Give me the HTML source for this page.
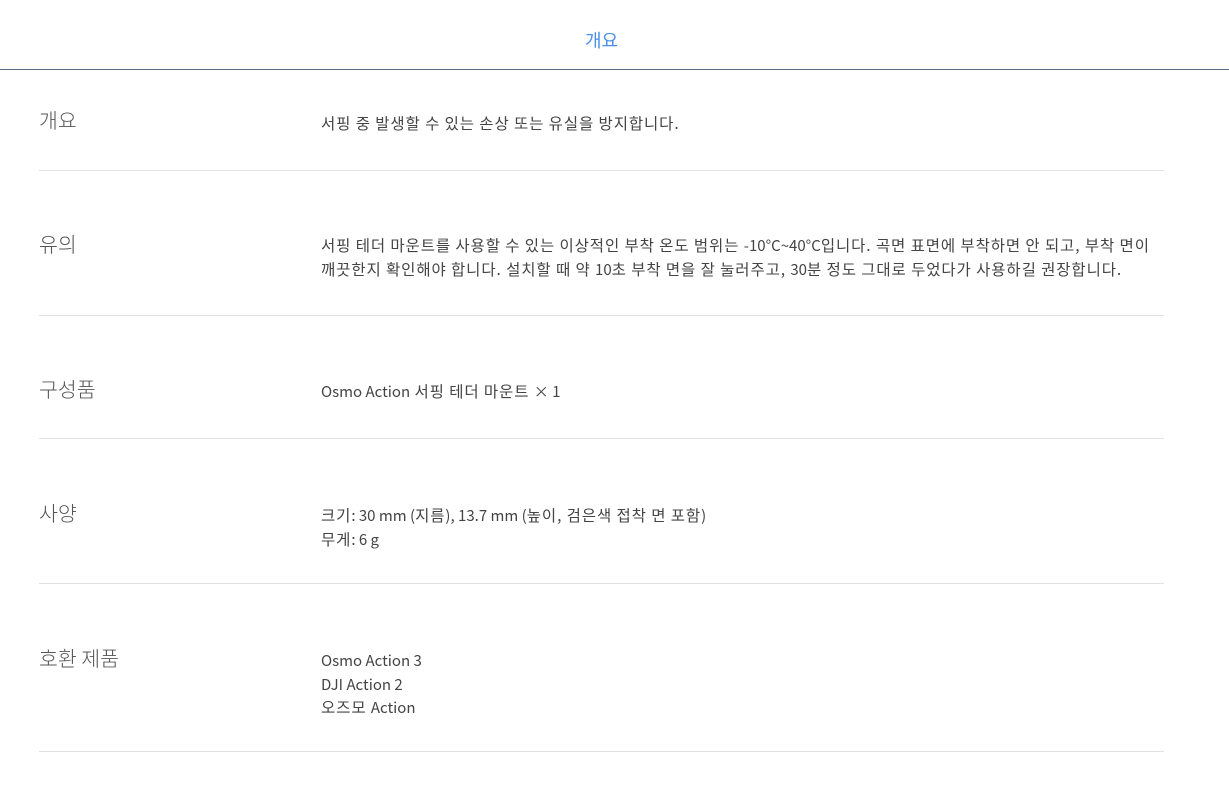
<!DOCTYPE html>
<html><head><meta charset="utf-8"><style>
body{margin:0;width:1229px;height:788px;background:#fff;position:relative;overflow:hidden;font-family:"Noto Sans CJK KR",sans-serif;}
.t{position:absolute;white-space:nowrap}
.h{position:absolute;left:0;width:1229px;height:1px;background:#5a6a80;top:69px}
.d{position:absolute;left:39px;width:1125px;height:1px;background:#e2e2e2}
.l{position:absolute;left:39px;font-size:20.5px;color:#555;line-height:24px;font-weight:300}
.c{position:absolute;left:321px;font-size:15.5px;letter-spacing:0.9px;color:#444;line-height:22.7px;white-space:nowrap}
.e{letter-spacing:0;font-size:15px}
</style></head><body>
<div class="t" style="left:585px;top:28px;font-size:18px;color:#4a8fe8;line-height:24px">개요</div>
<div class="h"></div>
<div class="l" style="top:107px">개요</div>
<div class="c" style="top:112px">서핑 중 발생할 수 있는 손상 또는 유실을 방지합니다.</div>
<div class="d" style="top:170px"></div>
<div class="l" style="top:231px">유의</div>
<div class="c" style="top:234px">서핑 테더 마운트를 사용할 수 있는 이상적인 부착 온도 범위는 <span class="e">-10°C~40°C</span>입니다. 곡면 표면에 부착하면 안 되고, 부착 면이<br>깨끗한지 확인해야 합니다. 설치할 때 약 <span class="e">10</span>초 부착 면을 잘 눌러주고, <span class="e">30</span>분 정도 그대로 두었다가 사용하길 권장합니다.</div>
<div class="d" style="top:315px"></div>
<div class="l" style="top:376px">구성품</div>
<div class="c" style="top:380px"><span class="e">Osmo Action</span> 서핑 테더 마운트 <span class="e">× 1</span></div>
<div class="d" style="top:438px"></div>
<div class="l" style="top:500px">사양</div>
<div class="c" style="top:504px">크기<span class="e">: 30 mm (</span>지름<span class="e">), 13.7 mm (</span>높이, 검은색 접착 면 포함<span class="e">)</span><br>무게<span class="e">: 6 g</span></div>
<div class="d" style="top:583px"></div>
<div class="l" style="top:645px">호환 제품</div>
<div class="c" style="top:649px"><span class="e">Osmo Action 3</span><br><span class="e">DJI Action 2</span><br>오즈모 <span class="e">Action</span></div>
<div class="d" style="top:751px"></div>
</body></html>
